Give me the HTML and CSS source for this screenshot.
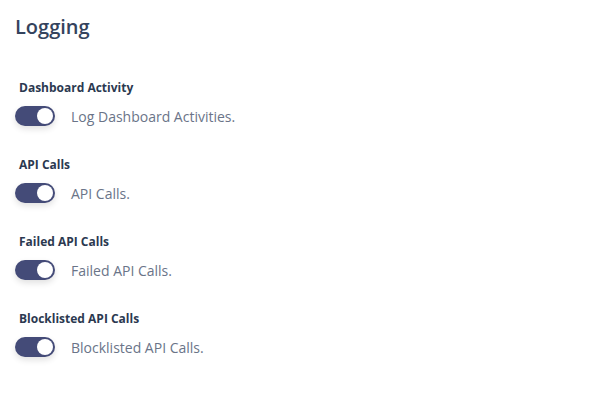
FILE: index.html
```html
<!DOCTYPE html>
<html lang="en">

<head>
  <meta charset="UTF-8" />
  <meta name="viewport" content="width=device-width, initial-scale=1.0" />
  <title>Logging</title>
  <link rel="stylesheet" href="styles.css">
</head>

<body>
  <section class="logging">
    <h2>Logging</h2>

    <div class="setting">
      <h4>Dashboard Activity</h4>
      <label class="switch-row">
        <span class="switch on"><span class="knob"></span></span>
        <span class="switch-text">Log Dashboard Activities.</span>
      </label>
    </div>

    <div class="setting">
      <h4>API Calls</h4>
      <label class="switch-row">
        <span class="switch on"><span class="knob"></span></span>
        <span class="switch-text">API Calls.</span>
      </label>
    </div>

    <div class="setting">
      <h4>Failed API Calls</h4>
      <label class="switch-row">
        <span class="switch on"><span class="knob"></span></span>
        <span class="switch-text">Failed API Calls.</span>
      </label>
    </div>

    <div class="setting">
      <h4>Blocklisted API Calls</h4>
      <label class="switch-row">
        <span class="switch on"><span class="knob"></span></span>
        <span class="switch-text">Blocklisted API Calls.</span>
      </label>
    </div>
  </section>
</body>

</html>
```

FILE: styles.css
```css
* {
  margin: 0;
  padding: 0;
  box-sizing: border-box;
}

html,
body {
  font-family: 'Open Sans', 'Noto Sans', sans-serif;
  background: #ffffff;
  color: #33425b;
}

.logging {
  padding: 13px 15px;
  display: flex;
  flex-direction: column;
  gap: 31px;
}

.logging h2 {
  font-size: 20px;
  font-weight: 600;
  line-height: 28px;
  color: #34435d;
  margin-bottom: 8px;
}

.setting h4 {
  font-size: 12px;
  font-weight: 700;
  line-height: 16px;
  color: #2b3950;
  padding-left: 4px;
  margin-bottom: 10px;
}

.switch-row {
  display: flex;
  align-items: center;
  gap: 16px;
}

.switch {
  width: 40px;
  height: 20px;
  border-radius: 10px;
  background-color: #444b78;
  display: flex;
  align-items: center;
  padding: 2px;
  box-shadow: 0 3px 6px rgba(0, 0, 0, 0.12);
}

.switch.on {
  justify-content: flex-end;
}

.knob {
  width: 16px;
  height: 16px;
  border-radius: 50%;
  background: #ffffff;
}

.switch-text {
  font-size: 14px;
  color: #6a7488;
}
```
